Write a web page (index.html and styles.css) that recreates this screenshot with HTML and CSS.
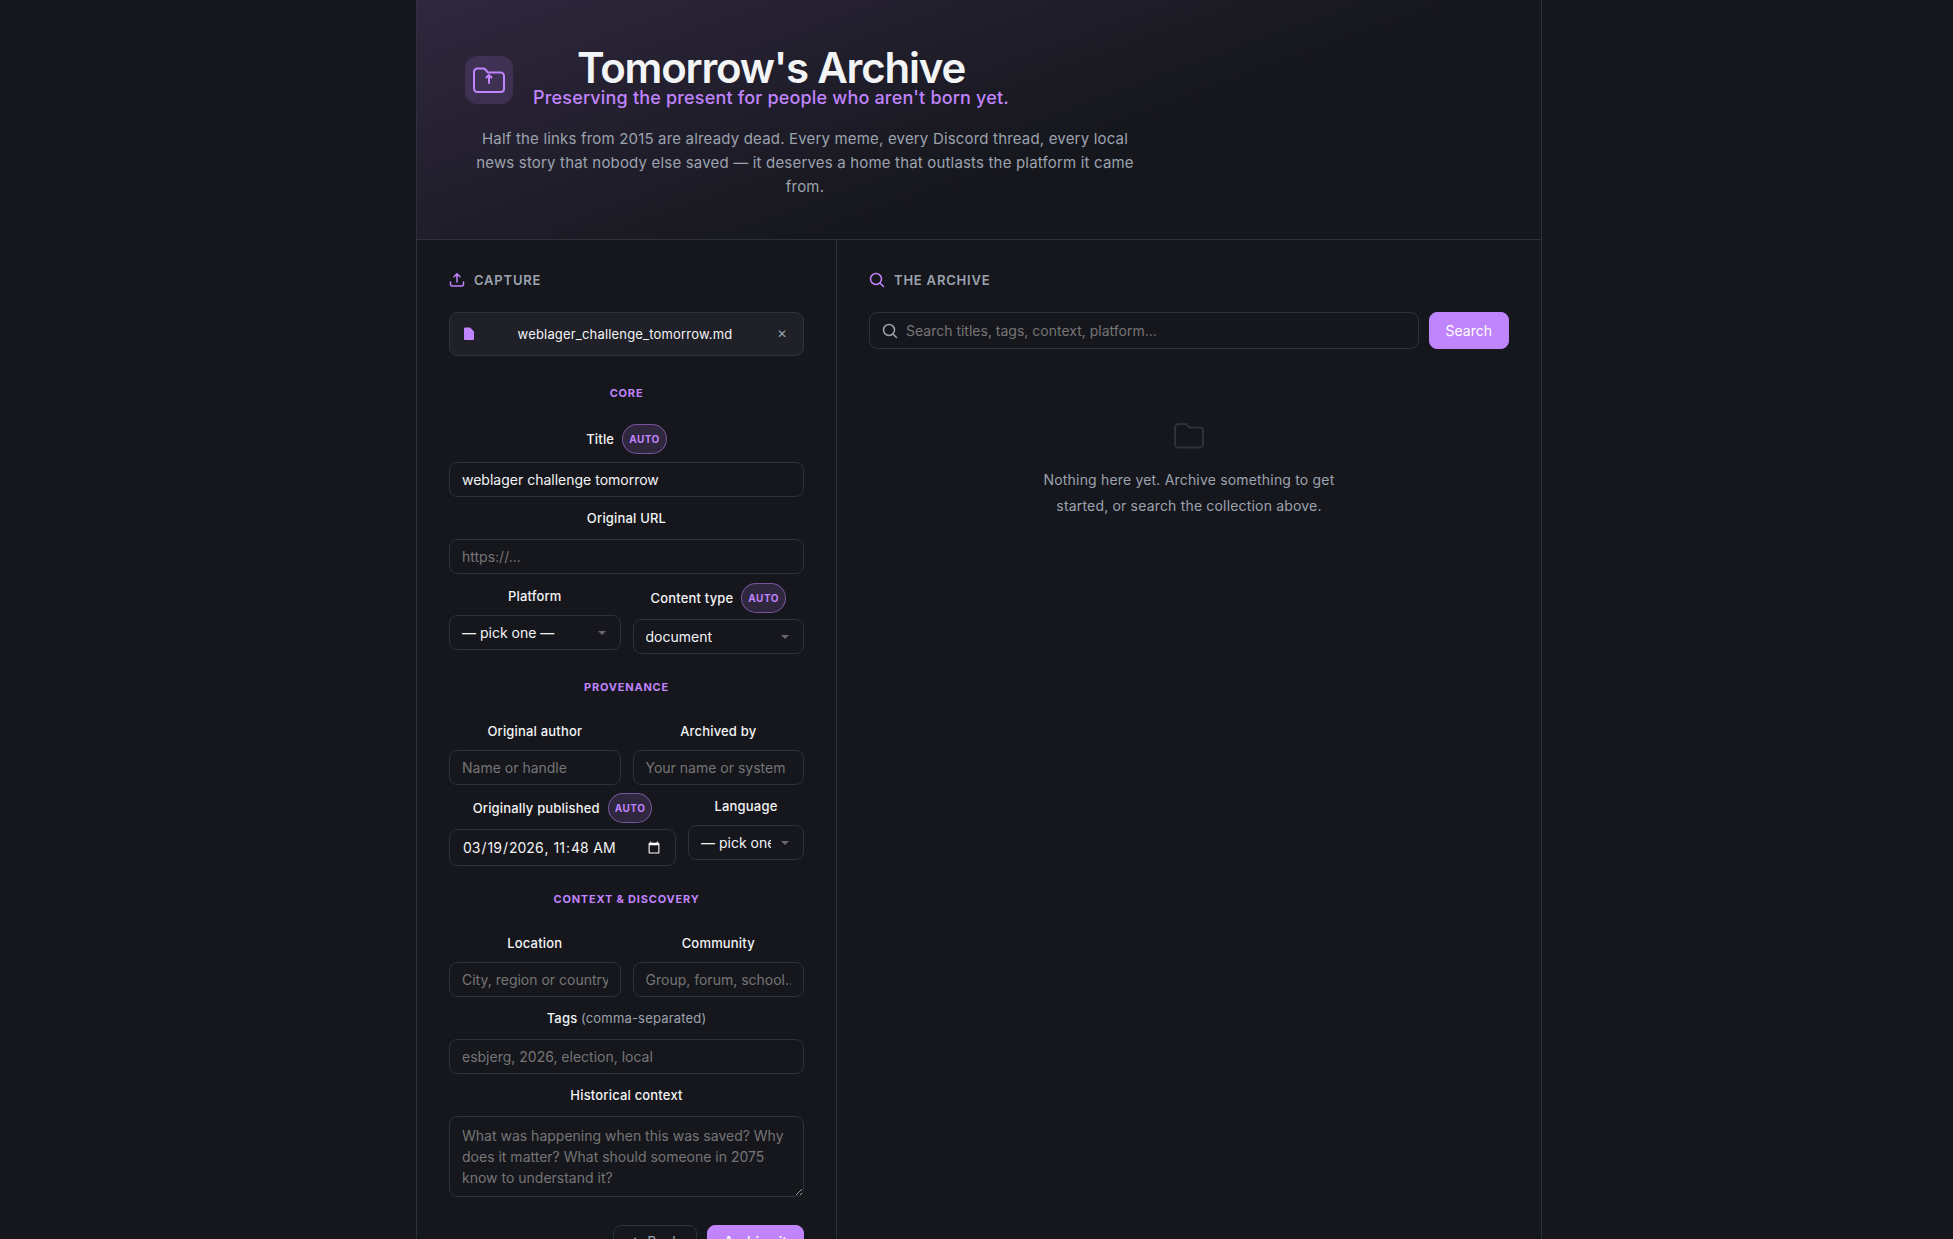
FILE: index.html
```html
<!DOCTYPE html>
<html lang="en">
<head>
<meta charset="utf-8">
<meta name="viewport" content="width=device-width, initial-scale=1">
<title>Tomorrow's Archive</title>
<link rel="stylesheet" href="styles.css">
</head>
<body>
<div class="app">
  <header class="hero">
    <div class="brand">
      <span class="brand-icon">
        <svg width="36" height="36" viewBox="0 0 36 36" fill="none" stroke="currentColor" stroke-width="2" stroke-linecap="round" stroke-linejoin="round" aria-hidden="true">
          <path d="M3 10a3.500 3.500 0 0 1 3.500-3.500h5.500a3 3 0 0 1 2.300 1l2.700 3h12.500a3.500 3.500 0 0 1 3.500 3.500v13a3 3 0 0 1-3 3H6.500a3.500 3.500 0 0 1-3.500-3.500z"/>
          <path d="M18 21v-8M15.500 15.500l2.500-2.500 2.500 2.500"/>
        </svg>
      </span>
      <div>
        <h1>Tomorrow's Archive</h1>
        <p class="tagline">Preserving the present for people who aren't born yet.</p>
      </div>
    </div>
    <p class="intro">Half the links from 2015 are already dead. Every meme, every Discord thread, every local news story that nobody else saved — it deserves a home that outlasts the platform it came from.</p>
  </header>

  <main class="columns">
    <section class="capture">
      <h2>
        <svg width="16" height="16" viewBox="0 0 16 16" fill="none" stroke="currentColor" stroke-width="1.500" stroke-linecap="round" stroke-linejoin="round" aria-hidden="true"><path d="M8 10V2M5 4.800L8 1.800l3 3M1.500 10v2.500a1.500 1.500 0 0 0 1.500 1.500h10a1.500 1.500 0 0 0 1.500-1.500V10"/></svg>
        Capture
      </h2>
      <div class="file">
        <svg width="12" height="14" viewBox="0 0 12 14" fill="currentColor" aria-hidden="true"><path d="M2 0.500h5l4 4V12a1 1 0 0 1-1 1H2a1 1 0 0 1-1-1V1.500a1 1 0 0 1 1-1z"/></svg>
        <span class="file-name">weblager_challenge_tomorrow.md</span>
        <button type="button" class="file-clear" aria-label="Remove file">✕</button>
      </div>

      <form class="form">
        <h3>Core</h3>
        <div class="field">
          <div class="label-line"><label for="title">Title</label><span class="auto">auto</span></div>
          <input id="title" type="text" value="weblager challenge tomorrow">
        </div>
        <div class="field">
          <div class="label-line"><label for="url">Original URL</label></div>
          <input id="url" type="url" placeholder="https://...">
        </div>
        <div class="pair">
          <div class="field">
            <div class="label-line"><label for="platform">Platform</label></div>
            <select id="platform"><option>— pick one —</option></select>
          </div>
          <div class="field">
            <div class="label-line"><label for="type">Content type</label><span class="auto">auto</span></div>
            <select id="type"><option>document</option></select>
          </div>
        </div>

        <h3>Provenance</h3>
        <div class="pair">
          <div class="field">
            <div class="label-line"><label for="author">Original author</label></div>
            <input id="author" type="text" placeholder="Name or handle">
          </div>
          <div class="field">
            <div class="label-line"><label for="archiver">Archived by</label></div>
            <input id="archiver" type="text" placeholder="Your name or system">
          </div>
        </div>
        <div class="pair pair-date">
          <div class="field">
            <div class="label-line"><label for="published">Originally published</label><span class="auto">auto</span></div>
            <input id="published" type="datetime-local" value="2026-03-19T11:48">
          </div>
          <div class="field">
            <div class="label-line"><label for="language">Language</label></div>
            <select id="language"><option>— pick one —</option></select>
          </div>
        </div>

        <h3>Context &amp; Discovery</h3>
        <div class="pair">
          <div class="field">
            <div class="label-line"><label for="location">Location</label></div>
            <input id="location" type="text" placeholder="City, region or country">
          </div>
          <div class="field">
            <div class="label-line"><label for="community">Community</label></div>
            <input id="community" type="text" placeholder="Group, forum, school...">
          </div>
        </div>
        <div class="field">
          <div class="label-line"><label for="tags">Tags <span class="hint">(comma-separated)</span></label></div>
          <input id="tags" type="text" placeholder="esbjerg, 2026, election, local">
        </div>
        <div class="field">
          <div class="label-line"><label for="context">Historical context</label></div>
          <textarea id="context" rows="3" placeholder="What was happening when this was saved? Why does it matter? What should someone in 2075 know to understand it?"></textarea>
        </div>
        <div class="actions">
          <button type="button" class="button ghost">← Back</button>
          <button type="submit" class="button primary save">Archive it</button>
        </div>
      </form>
    </section>

    <section class="archive">
      <h2>
        <svg width="16" height="16" viewBox="0 0 16 16" fill="none" stroke="currentColor" stroke-width="1.500" stroke-linecap="round" aria-hidden="true"><circle cx="7" cy="7" r="5.500"/><path d="M11 11l3.500 3.500"/></svg>
        The Archive
      </h2>
      <form class="search">
        <div class="search-box">
          <svg width="16" height="16" viewBox="0 0 16 16" fill="none" stroke="currentColor" stroke-width="1.500" stroke-linecap="round" aria-hidden="true"><circle cx="7" cy="7" r="5.500"/><path d="M11 11l3.500 3.500"/></svg>
          <input type="text" aria-label="Search the archive" placeholder="Search titles, tags, context, platform...">
        </div>
        <button type="submit" class="button primary">Search</button>
      </form>
      <div class="empty">
        <svg width="40" height="40" viewBox="0 0 40 40" fill="none" stroke="currentColor" stroke-width="2" stroke-linejoin="round" aria-hidden="true"><path d="M6 12a4 4 0 0 1 4-4h6a3 3 0 0 1 2.200 1l2.300 2.500h10.500a3 3 0 0 1 3 3V28a3.500 3.500 0 0 1-3.500 3.500H9.500A3.500 3.500 0 0 1 6 28z"/></svg>
        <p>Nothing here yet. Archive something to get started, or search the collection above.</p>
      </div>
    </section>
  </main>
</div>
</body>
</html>
```
FILE: styles.css
```css
:root {
  --bg: #16171d;
  --text: #9ca3af;
  --heading: #f3f4f6;
  --border: #2e303a;
  --surface: #1f2028;
  --accent: #c084fc;
  --accent-bg: rgba(192, 132, 252, 0.15);
  --accent-border: rgba(192, 132, 252, 0.5);
  color-scheme: dark;
  text-rendering: optimizeLegibility;
}

* { box-sizing: border-box; }

body {
  margin: 0;
  padding-left: 5px;
  background: var(--bg);
  color: var(--text);
  font-family: Inter, sans-serif;
  font-size: 18px;
  line-height: 26px;
  letter-spacing: 0.18px;
}

.app {
  max-width: 1126px;
  min-height: 100vh;
  margin: 0 auto;
  border-left: 1px solid var(--border);
  border-right: 1px solid var(--border);
  display: flex;
  flex-direction: column;
  text-align: center;
}

h1, h2, h3, p { margin: 0; }

.hero {
  padding: 50px 48px 40px;
  border-bottom: 1px solid var(--border);
  background: linear-gradient(160deg, var(--accent-bg), transparent 60%);
}

.brand {
  display: flex;
  align-items: center;
  gap: 20px;
  margin-bottom: 17px;
}

.brand-icon {
  display: flex;
  align-items: center;
  justify-content: center;
  width: 48px;
  height: 48px;
  border-radius: 12px;
  background: var(--accent-bg);
  color: var(--accent);
}

h1 {
  font-size: 42px;
  line-height: 36px;
  font-weight: 600;
  letter-spacing: -1.2px;
  color: var(--heading);
}

.tagline {
  line-height: 24px;
  font-weight: 500;
  color: var(--accent);
}

.intro {
  max-width: 680px;
  font-size: 15px;
  line-height: 24px;
}

.columns {
  flex: 1;
  display: grid;
  grid-template-columns: 420px 1fr;
}

.capture, .archive { padding: 32px; }
.capture { border-right: 1px solid var(--border); }

h2 {
  display: flex;
  align-items: center;
  gap: 9px;
  margin-bottom: 24px;
  font-size: 13px;
  line-height: 16px;
  font-weight: 600;
  letter-spacing: 0.8px;
  text-transform: uppercase;
}

h2 svg { color: var(--accent); }

.file {
  display: flex;
  align-items: center;
  gap: 10px;
  height: 44px;
  padding: 0 14px 0 13px;
  border: 1px solid var(--border);
  border-radius: 8px;
  background: var(--surface);
  color: var(--accent);
}

.file-name {
  flex: 1;
  font-size: 13px;
  color: var(--heading);
}

.file-clear {
  padding: 2px;
  border: 0;
  background: none;
  color: var(--text);
  font: 12px/16px Inter, sans-serif;
}

h3 {
  margin: 17px 0 15px;
  font-size: 11px;
  line-height: 16px;
  font-weight: 700;
  letter-spacing: 0.8px;
  text-transform: uppercase;
  color: var(--accent);
}

.form {
  display: flex;
  flex-direction: column;
  gap: 8px;
  margin-top: 12px;
}

.field {
  display: flex;
  flex-direction: column;
  gap: 8px;
  min-width: 0;
}

.pair {
  display: grid;
  grid-template-columns: 1fr 1fr;
  gap: 12px;
  align-items: start;
}

.field + .pair { margin-top: 1px; }
.pair .field { gap: 6px; }
.pair-date { grid-template-columns: 1fr 116px; }

.label-line {
  display: flex;
  align-items: center;
  justify-content: center;
  gap: 8px;
  font-size: 13px;
}

label {
  font-weight: 500;
  color: var(--heading);
}

.hint {
  font-weight: 400;
  color: var(--text);
}

.auto {
  padding: 1px 6px;
  border: 1px solid var(--accent-border);
  border-radius: 15px;
  background: var(--accent-bg);
  color: var(--accent);
  font-size: 10px;
  font-weight: 700;
  letter-spacing: 0.5px;
  text-transform: uppercase;
}

input, select, textarea {
  width: 100%;
  margin: 0;
  padding: 8px 12px;
  border: 1px solid var(--border);
  border-radius: 8px;
  background: var(--bg);
  color: var(--heading);
  font: 14px/17px Inter, sans-serif;
  text-rendering: inherit;
}

input::placeholder, textarea::placeholder { color: #757575; }

select {
  appearance: none;
  padding-right: 32px;
  background: var(--bg) url("data:image/svg+xml,%3Csvg xmlns='http://www.w3.org/2000/svg' width='8' height='4'%3E%3Cpath d='M0 0h8L4 4z' fill='%236b6375'/%3E%3C/svg%3E") no-repeat right 14px center;
}

textarea {
  display: block;
  line-height: 21px;
  resize: vertical;
}

.actions {
  display: flex;
  justify-content: flex-end;
  gap: 10px;
  margin-top: 20px;
}

.button {
  padding: 7px 16px;
  border: 1px solid var(--border);
  border-radius: 8px;
  font: 14px/17px Inter, sans-serif;
  text-rendering: inherit;
}

.primary {
  border-color: var(--accent);
  background: var(--accent);
  color: #fff;
}

.save { font-weight: 500; }

.ghost {
  background: none;
  color: var(--text);
}

.search {
  display: flex;
  gap: 10px;
}

.search-box {
  flex: 1;
  display: flex;
  align-items: center;
  height: 37px;
  padding-left: 12px;
  border: 1px solid var(--border);
  border-radius: 8px;
}

.search-box svg { flex: none; }

.search-box input {
  padding: 8px;
  border: 0;
  background: none;
}

.empty {
  display: flex;
  flex-direction: column;
  align-items: center;
  gap: 11px;
  padding: 67px 0;
}

.empty svg { color: var(--border); }

.empty p {
  max-width: 320px;
  font-size: 14px;
}
```
